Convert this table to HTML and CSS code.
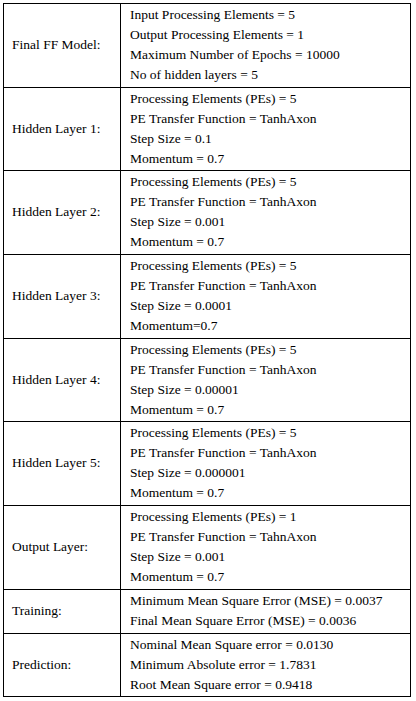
FILE: index.html
```html
<!DOCTYPE html>
<html>
<head>
<meta charset="utf-8">
<link rel="stylesheet" href="styles.css">
</head>
<body>
<table class="params">
  <tr>
    <td class="label">Final FF Model:</td>
    <td class="values">Input Processing Elements = 5<br>Output Processing Elements = 1<br>Maximum Number of Epochs = 10000<br>No of hidden layers = 5</td>
  </tr>
  <tr>
    <td class="label">Hidden Layer 1:</td>
    <td class="values">Processing Elements (PEs) = 5<br>PE Transfer Function = TanhAxon<br>Step Size = 0.1<br>Momentum = 0.7</td>
  </tr>
  <tr>
    <td class="label">Hidden Layer 2:</td>
    <td class="values">Processing Elements (PEs) = 5<br>PE Transfer Function = TanhAxon<br>Step Size = 0.001<br>Momentum = 0.7</td>
  </tr>
  <tr>
    <td class="label">Hidden Layer 3:</td>
    <td class="values">Processing Elements (PEs) = 5<br>PE Transfer Function = TanhAxon<br>Step Size = 0.0001<br>Momentum=0.7</td>
  </tr>
  <tr>
    <td class="label">Hidden Layer 4:</td>
    <td class="values">Processing Elements (PEs) = 5<br>PE Transfer Function = TanhAxon<br>Step Size = 0.00001<br>Momentum = 0.7</td>
  </tr>
  <tr>
    <td class="label">Hidden Layer 5:</td>
    <td class="values">Processing Elements (PEs) = 5<br>PE Transfer Function = TanhAxon<br>Step Size = 0.000001<br>Momentum = 0.7</td>
  </tr>
  <tr>
    <td class="label">Output Layer:</td>
    <td class="values">Processing Elements (PEs) = 1<br>PE Transfer Function = TahnAxon<br>Step Size = 0.001<br>Momentum = 0.7</td>
  </tr>
  <tr>
    <td class="label">Training:</td>
    <td class="values">Minimum Mean Square Error (MSE) = 0.0037<br>Final Mean Square Error (MSE) = 0.0036</td>
  </tr>
  <tr>
    <td class="label">Prediction:</td>
    <td class="values">Nominal Mean Square error = 0.0130<br>Minimum Absolute error = 1.7831<br>Root Mean Square error = 0.9418</td>
  </tr>
</table>
</body>
</html>
```

FILE: styles.css
```css
html, body {
  margin: 0;
  padding: 0;
  background: #fff;
}
body {
  padding: 3px 0 0 3px;
  font-family: "Liberation Serif", "Times New Roman", serif;
  font-size: 13.5px;
  color: #000;
}
.params {
  border-collapse: collapse;
  width: 408px;
  border: 1px solid #000;
}
.params td {
  border: 1px solid #000;
  line-height: 20px;
  padding: 1px 0 1.7px 0;
  vertical-align: middle;
  white-space: nowrap;
}
.params .label {
  width: 108px;
  padding-left: 8px;
}
.params .values {
  padding-left: 9px;
}
```
